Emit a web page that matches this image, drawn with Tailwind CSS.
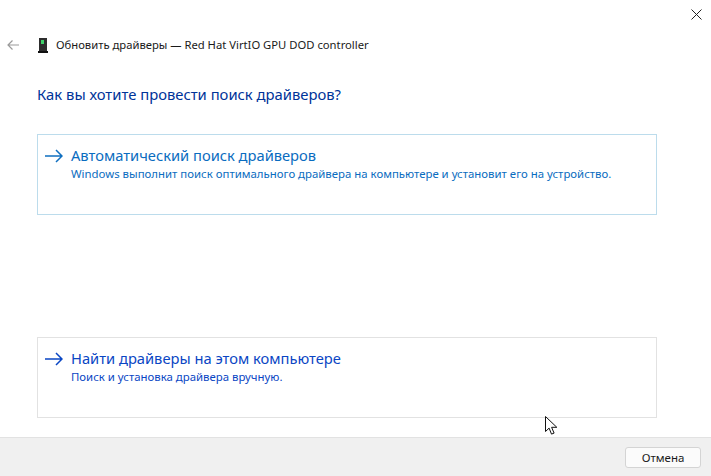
<!DOCTYPE html>
<html lang="ru">
<head>
    <meta charset="utf-8"/>
    <title>Обновить драйверы</title>
    <script src="https://cdn.jsdelivr.net/npm/@tailwindcss/browser@4"></script>
</head>
<body class="relative w-[711px] h-[476px] overflow-hidden bg-white font-['Noto_Sans',sans-serif]">
    <div class="flex flex-col h-full">
        <!-- title bar -->
        <div class="flex justify-end h-[34px] pt-[9px] pr-[9px]">
            <svg width="11" height="11" viewBox="0 0 11 11" fill="none" stroke="#222" stroke-width="1"><path d="M.5.5l10 10M10.5.5l-10 10"/></svg>
        </div>
        <div class="flex items-center h-[22px] pl-[7px]">
            <svg width="12" height="10" viewBox="0 0 12 10" fill="none" stroke="#9a9a9a" stroke-width="1.2"><path d="M12 5H1M5.5.5L1 5l4.5 4.5"/></svg>
            <svg class="ml-[19px]" width="10" height="15" viewBox="0 0 10 15"><rect x="1" y="0" width="8" height="13" fill="#2d2d2d"/><rect x="3" y="2" width="3" height="4" fill="#3fd06a"/><rect x="0" y="13" width="10" height="2" fill="#111"/></svg>
            <span class="ml-[8px] text-[11.25px] leading-[22px] text-[#1a1a1a] whitespace-nowrap">Обновить драйверы — Red Hat VirtIO GPU DOD controller</span>
        </div>
        <h1 class="mt-[26px] pl-[37px] text-[14.8px] leading-[24px] font-normal text-[#003399]">Как вы хотите провести поиск драйверов?</h1>

        <div class="flex flex-col gap-[122px] mt-[28px] ml-[37px] w-[620px]">
            <div class="flex h-[81px] border border-[#bcdcec] pl-[7px] pt-[10px]">
                <svg class="mt-[4px] shrink-0" width="18" height="14" viewBox="0 0 18 14" fill="none" stroke="#0f6fc0" stroke-width="1.5"><path d="M0 7h17M11 1l6 6-6 6"/></svg>
                <div class="ml-[8px]">
                    <div class="text-[14.7px] leading-[21px] text-[#0a6cc0] whitespace-nowrap">Автоматический поиск драйверов</div>
                    <div class="text-[11.4px] leading-[15px] text-[#0a6cc0] whitespace-nowrap">Windows выполнит поиск оптимального драйвера на компьютере и установит его на устройство.</div>
                </div>
            </div>
            <div class="flex h-[81px] border border-[#e2e2e2] pl-[7px] pt-[10px]">
                <svg class="mt-[4px] shrink-0" width="18" height="14" viewBox="0 0 18 14" fill="none" stroke="#0a46c4" stroke-width="1.5"><path d="M0 7h17M11 1l6 6-6 6"/></svg>
                <div class="ml-[8px]">
                    <div class="text-[14.7px] leading-[21px] text-[#0a46c4] whitespace-nowrap">Найти драйверы на этом компьютере</div>
                    <div class="text-[11.4px] leading-[15px] text-[#0a46c4] whitespace-nowrap">Поиск и установка драйвера вручную.</div>
                </div>
            </div>
        </div>

        <!-- footer -->
        <div class="flex justify-end items-start mt-auto h-[39px] pt-[9px] pr-[10px] bg-[#f0f0f0] border-t border-[#e2e2e2]">
            <div class="flex items-center justify-center w-[76px] h-[21px] bg-[#fbfbfb] border border-[#d4d4d4] rounded-[3px] text-[11.5px] text-[#1a1a1a]">Отмена</div>
        </div>
    </div>

    <!-- mouse cursor -->
    <svg class="absolute left-[545px] top-[416px]" width="13" height="19" viewBox="0 0 13 19" fill="#fff" stroke="#111" stroke-width="1"><path d="M.5.5v15l3.6-3.4 2.4 6 2.6-1-2.5-5.8h5.2z"/></svg>
</body>
</html>
